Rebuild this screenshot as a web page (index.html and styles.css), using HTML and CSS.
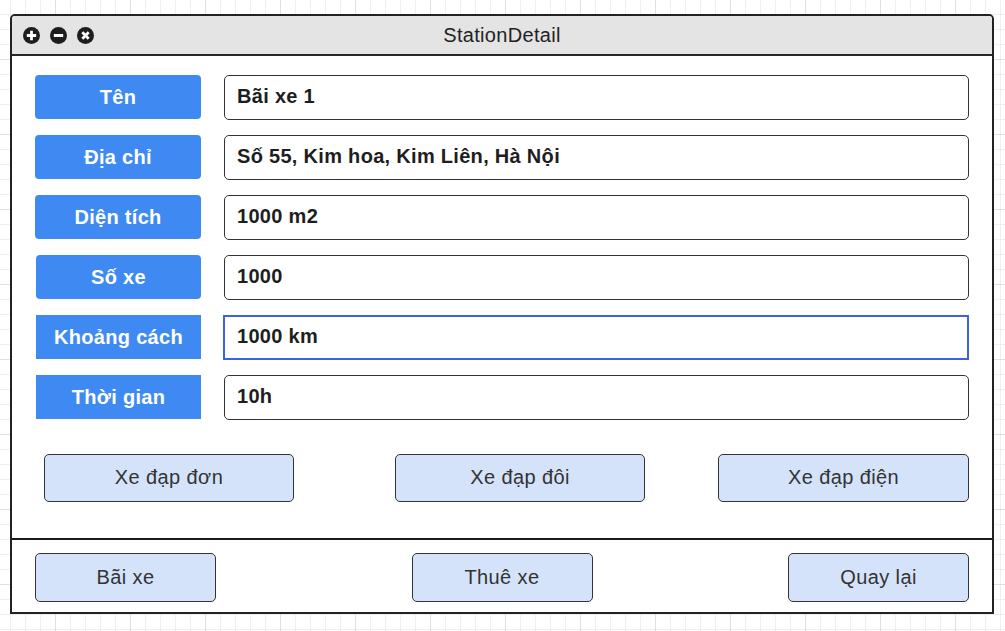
FILE: index.html
```html
<!DOCTYPE html>
<html lang="vi">
<head>
<meta charset="utf-8">
<title>StationDetail</title>
<link rel="stylesheet" href="styles.css">
</head>
<body>
<div class="window">
  <div class="titlebar">
    <div class="controls">
      <svg class="ctl" viewBox="0 0 16 16" width="17" height="17"><circle cx="8" cy="8" r="8" fill="#1e1e1e"/><path d="M8 3.6v8.8M3.6 8h8.8" stroke="#fff" stroke-width="2.6"/></svg>
      <svg class="ctl" viewBox="0 0 16 16" width="17" height="17"><circle cx="8" cy="8" r="8" fill="#1e1e1e"/><path d="M3.6 8h8.8" stroke="#fff" stroke-width="2.8"/></svg>
      <svg class="ctl" viewBox="0 0 16 16" width="17" height="17"><circle cx="8" cy="8" r="8" fill="#1e1e1e"/><path d="M5 5l6 6M11 5l-6 6" stroke="#fff" stroke-width="2.6"/></svg>
    </div>
    <div class="title">StationDetail</div>
    <div></div>
  </div>
  <div class="content">
    <div class="fields">
      <div class="row"><div class="label rounded">Tên</div><div class="value">Bãi xe 1</div></div>
      <div class="row"><div class="label rounded">Địa chỉ</div><div class="value">Số 55, Kim hoa, Kim Liên, Hà Nội</div></div>
      <div class="row"><div class="label rounded">Diện tích</div><div class="value">1000 m2</div></div>
      <div class="row"><div class="label rounded shift">Số xe</div><div class="value">1000</div></div>
      <div class="row"><div class="label shift">Khoảng cách</div><div class="value focused">1000 km</div></div>
      <div class="row"><div class="label shift">Thời gian</div><div class="value">10h</div></div>
    </div>
    <div class="choices">
      <button class="btn choice c1">Xe đạp đơn</button>
      <button class="btn choice c2">Xe đạp đôi</button>
      <button class="btn choice c3">Xe đạp điện</button>
    </div>
  </div>
  <div class="footer">
    <button class="btn nav">Bãi xe</button>
    <button class="btn nav">Thuê xe</button>
    <button class="btn nav">Quay lại</button>
  </div>
</div>
</body>
</html>
```
FILE: styles.css
```css
html, body {
  margin: 0;
  padding: 0;
}
body {
  min-height: 100vh;
  background-color: #ffffff;
  background-image:
    linear-gradient(to right, #e0e0e0 1px, transparent 1px),
    linear-gradient(to bottom, #e0e0e0 1px, transparent 1px),
    linear-gradient(to right, #efefef 1px, transparent 1px),
    linear-gradient(to bottom, #efefef 1px, transparent 1px);
  background-size: 75px 75px, 75px 75px, 15px 15px, 15px 15px;
  background-position: 55px 59px, 55px 59px, 10px 14px, 10px 14px;
  font-family: "Liberation Sans", Arial, sans-serif;
  padding: 14px 0 0 10px;
  box-sizing: border-box;
}
.window {
  width: 984px;
  height: 600px;
  box-sizing: border-box;
  border: 2px solid #222;
  border-radius: 5px 5px 0 0;
  background: #fff;
  display: flex;
  flex-direction: column;
}
.titlebar {
  height: 38px;
  flex: none;
  background: #e4e4e4;
  border-bottom: 2px solid #262626;
  border-radius: 3px 3px 0 0;
  display: grid;
  grid-template-columns: 1fr auto 1fr;
  align-items: center;
}
.controls {
  display: flex;
  gap: 10px;
  padding-left: 11px;
  padding-top: 1px;
}
.ctl {
  display: block;
}
.title {
  font-size: 20px;
  letter-spacing: 0.3px;
  color: #222;
}
.content {
  height: 484px;
  flex: none;
  box-sizing: border-box;
  border-bottom: 2px solid #1a1a1a;
  padding-top: 19px;
}
.fields {
  display: flex;
  flex-direction: column;
  gap: 15px;
  padding: 0 23px;
}
.row {
  display: flex;
  gap: 23px;
  height: 45px;
}
.label {
  width: 166px;
  height: 44px;
  flex: none;
  box-sizing: border-box;
  background: #3e8af2;
  color: #fff;
  font-weight: bold;
  font-size: 20px;
  letter-spacing: 0.3px;
  display: flex;
  align-items: center;
  justify-content: center;
}
.label.rounded {
  border-radius: 4px;
}
.label.shift {
  margin-left: 1px;
  width: 165px;
}
.value {
  flex: 1;
  box-sizing: border-box;
  height: 45px;
  border: 1px solid #333;
  border-radius: 5px;
  padding: 0 12px;
  display: flex;
  align-items: center;
  font-weight: bold;
  font-size: 20px;
  letter-spacing: 0.3px;
  color: #1e1e1e;
  padding-bottom: 3px;
}
.value.focused {
  border: 2px solid #3d62dc;
  border-radius: 0;
  margin-left: -1px;
  padding-left: 12px;
}
.btn {
  box-sizing: border-box;
  border: 1px solid #333;
  border-radius: 5px;
  background: #d5e3fa;
  font-family: "Liberation Sans", Arial, sans-serif;
  font-size: 20px;
  letter-spacing: 0.4px;
  color: #333;
  padding: 0 0 1px 0;
  cursor: pointer;
}
.choices {
  display: flex;
  padding: 0 23px 0 32px;
  margin-top: 34px;
}
.choice {
  width: 250px;
  height: 48px;
}
.c2 {
  margin-left: 101px;
}
.c3 {
  margin-left: 73px;
  width: 251px;
}
.footer {
  flex: 1;
  display: flex;
  justify-content: space-between;
  align-items: flex-start;
  padding: 13px 23px 0 23px;
}
.nav {
  width: 181px;
  height: 49px;
}
```
